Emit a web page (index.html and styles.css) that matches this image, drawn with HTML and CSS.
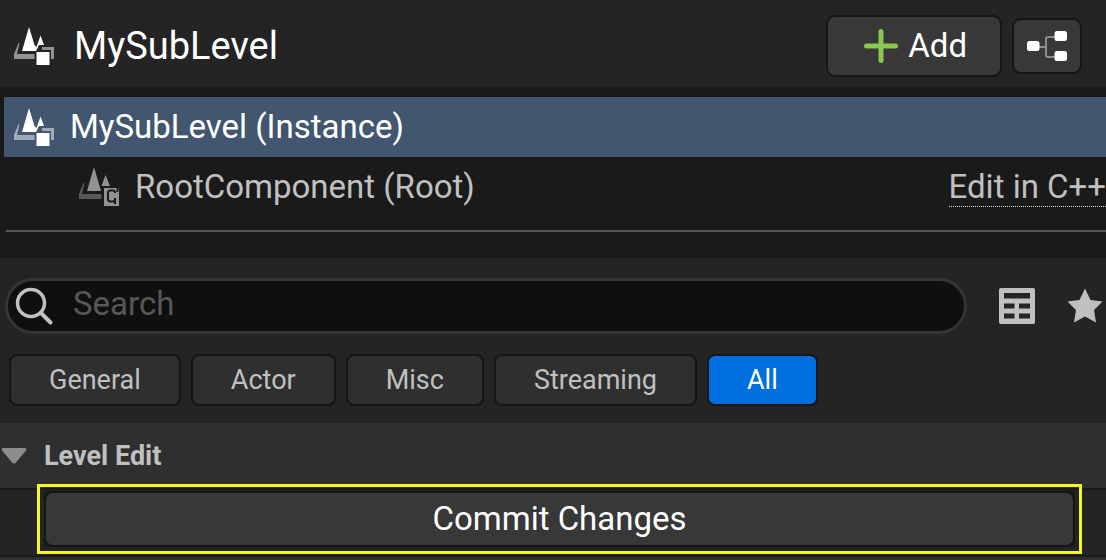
FILE: index.html
```html
<!DOCTYPE html>
<html lang="en">
<head>
    <meta charset="UTF-8">
    <meta name="viewport" content="width=device-width, initial-scale=1.0">
    <title>MySubLevel - Details</title>
    <link rel="stylesheet" href="styles.css">
</head>
<body>

<header class="header">
    <svg class="level-icon" viewBox="0 0 40 38" aria-hidden="true">
        <path class="base" d="M4.500 16H5.500L3 27H20.500V32H0V27Z M28 20H40V32H37V23H28Z"/>
        <path class="solid" d="M15 0L20.500 18L22.500 20L26.500 8.500L30 18H25L22 24H8Z"/>
        <path class="solid" d="M22.500 25H35.500V38H22.500Z"/>
    </svg>
    <h1>MySubLevel</h1>
    <div class="header-actions">
        <button type="button" class="btn add-btn">
            <svg width="34" height="34" viewBox="0 0 34 34" aria-hidden="true">
                <path d="M17 2.500V31.500M2.500 17H31.500" stroke="#8bc64f" stroke-width="5" stroke-linecap="round"/>
            </svg>
            Add
        </button>
        <button type="button" class="btn graph-btn" aria-label="Edit Blueprint">
            <svg width="40" height="32" viewBox="0 0 40 32" fill="none" aria-hidden="true">
                <path d="M12 17H19M28 7H21Q19 7 19 9V25Q19 27 21 27H28" stroke="#8c8c8c" stroke-width="2"/>
                <rect x="0" y="11" width="12.500" height="10" rx="2.500" fill="#fff"/>
                <rect x="27.500" y="1" width="12.500" height="10" rx="2.500" fill="#fff"/>
                <rect x="27.500" y="21" width="12.500" height="10" rx="2.500" fill="#fff"/>
            </svg>
        </button>
    </div>
</header>

<section class="tree">
    <div class="tree-row selected">
        <svg class="level-icon" viewBox="0 0 40 38" aria-hidden="true">
            <path class="base" d="M4.500 16H5.500L3 27H20.500V32H0V27Z M28 20H40V32H37V23H28Z"/>
            <path class="solid" d="M15 0L20.500 18L22.500 20L26.500 8.500L30 18H25L22 24H8Z"/>
            <path class="solid" d="M22.500 25H35.500V38H22.500Z"/>
        </svg>
        <span>MySubLevel (Instance)</span>
    </div>
    <div class="tree-row child">
        <svg width="40" height="40" viewBox="0 0 40 40" aria-hidden="true">
            <path d="M4.500 16H5.500L3 27H22.500V32H0V27Z" fill="#595959"/>
            <path d="M15 0L22 24H8Z M26.500 8L31 19H22.500Z" fill="#929292"/>
            <path d="M25 21H40V39H25Z" fill="#929292"/>
            <path d="M36 26V25Q36 23.500 34 23.500H31.500Q29 23.500 29 26V32Q29 34.500 31.500 34.500H34Q36 34.500 36 32.500V31M36 37V33M38.500 21V25" fill="none" stroke="#1a1a1a" stroke-width="2"/>
        </svg>
        <span>RootComponent (Root)</span>
        <a class="edit-link" href="#">Edit in C++</a>
    </div>
    <hr class="divider">
</section>

<section class="details">
    <div class="search-row">
        <label class="search-box">
            <svg width="40" height="40" viewBox="0 0 40 40" fill="none" stroke="#c0c0c0" aria-hidden="true">
                <circle cx="16" cy="17" r="13.500" stroke-width="3.500"/>
                <path d="M26 27L35.500 36.500" stroke-width="4" stroke-linecap="round"/>
            </svg>
            <input type="text" placeholder="Search" aria-label="Search">
        </label>
        <button type="button" class="icon-btn" aria-label="Property matrix">
            <svg width="36" height="36" viewBox="0 0 36 36" aria-hidden="true">
                <rect width="36" height="36" rx="2" fill="#c0c0c0"/>
                <path d="M5 5H31V10.500H5Z M5 15.500H15.500V20.500H5Z M20 15.500H31V20.500H20Z M5 25.500H15.500V30.500H5Z M20 25.500H31V30.500H20Z" fill="#242424"/>
            </svg>
        </button>
        <button type="button" class="icon-btn" aria-label="Favorites">
            <svg width="36" height="36" viewBox="0 0 36 36" aria-hidden="true">
                <path d="M18 0.500L23.500 12L35.500 13.500L27 22L29 34.500L18 28.500L7 34.500L9 22L0.500 13.500L12.500 12Z" fill="#c0c0c0"/>
            </svg>
        </button>
    </div>

    <div class="filters">
        <button type="button" class="filter">General</button>
        <button type="button" class="filter">Actor</button>
        <button type="button" class="filter">Misc</button>
        <button type="button" class="filter">Streaming</button>
        <button type="button" class="filter active">All</button>
    </div>

    <h2 class="category">
        <svg width="26" height="16" viewBox="0 0 26 16" aria-hidden="true">
            <path d="M2 0H24Q26 0.500 25 2.500L14.500 15Q13 16 11.500 15L1 2.500Q0 0.500 2 0Z" fill="#8c8c8c"/>
        </svg>
        Level Edit
    </h2>
    <div class="category-body">
        <div class="highlight">
            <button type="button" class="btn commit-btn">Commit Changes</button>
        </div>
    </div>
</section>

</body>
</html>
```
FILE: styles.css
```css
* {
    box-sizing: border-box;
}

body {
    font-family: Roboto, "Noto Sans", sans-serif;
    font-size: 33px;
    line-height: 40px;
    margin: 0;
    background-color: #2f2f2f;
    color: #c0c0c0;
    overflow-x: hidden;
}

button, input {
    font-family: inherit;
    font-size: inherit;
    line-height: inherit;
    color: inherit;
}

svg {
    display: block;
    flex: none;
}

.btn {
    display: flex;
    align-items: center;
    justify-content: center;
    background-color: #383838;
    color: white;
    border: 2px solid #151515;
    border-radius: 9px;
    cursor: pointer;
}

.btn:hover {
    background-color: #575757;
}

/* Header */
.header {
    display: flex;
    align-items: center;
    background-color: #242424;
    padding: 15px 24px 10px 14px;
}

.header h1 {
    font-size: 38px;
    font-weight: 400;
    color: white;
    margin: 0 0 0 20px;
}

.header-actions {
    display: flex;
    align-items: center;
    gap: 10px;
    margin-left: auto;
}

.add-btn {
    gap: 10px;
    padding: 9px 33px 9px 36px;
}

.graph-btn {
    padding: 10px 13px;
}

.level-icon {
    width: 40px;
    height: 38px;
}

.level-icon .base {
    fill: white;
    opacity: 0.5;
}

.level-icon .solid {
    fill: white;
}

/* Component tree */
.tree {
    background-color: #1a1a1a;
    padding: 10px 0 26px 4px;
}

.tree-row {
    display: flex;
    align-items: center;
    gap: 16px;
    height: 60px;
    padding-left: 10px;
    white-space: nowrap;
}

.selected {
    background-color: #42576f;
    color: white;
}

.child {
    padding-left: 75px;
}

.edit-link {
    margin-left: auto;
    color: inherit;
    line-height: 38px;
    text-decoration: none;
    border-bottom: 1px dotted #e0e0e0;
}

.divider {
    border: none;
    height: 2px;
    background-color: #575757;
    margin: 13px 0 0 2px;
}

/* Details */
.details {
    background-color: #242424;
    padding-top: 20px;
}

.search-row {
    display: flex;
    align-items: center;
    padding-left: 5px;
}

.search-box {
    display: flex;
    align-items: center;
    flex: 1;
    gap: 18px;
    height: 56px;
    margin-right: 22px;
    padding: 0 24px 0 7px;
    background-color: #0f0f0f;
    border: 3px solid #353535;
    border-radius: 28px;
}

.search-box input {
    flex: 1;
    min-width: 0;
    padding: 0 0 4px;
    background: none;
    border: none;
    outline: none;
}

.search-box input::placeholder {
    color: #575757;
    opacity: 1;
}

.icon-btn {
    padding: 0 10px;
    background: none;
    border: none;
    cursor: pointer;
}

.icon-btn + .icon-btn {
    padding: 0 3px 0 22px;
}

.filters {
    display: flex;
    gap: 10px;
    padding: 20px 9px 17px;
}

.filter {
    padding: 4px 38px;
    font-size: 27px;
    background-color: #2f2f2f;
    border: 2px solid #151515;
    border-radius: 8px;
    cursor: pointer;
}

.filter.active {
    background-color: #0070e0;
    color: white;
}

.category {
    display: flex;
    align-items: center;
    gap: 17px;
    margin: 0;
    padding: 13px 1px 12px;
    font-size: 27px;
    font-weight: 700;
    background-color: #2f2f2f;
}

.category-body {
    padding: 1px 31px 8px 44px;
    border-top: 2px solid #1a1a1a;
    border-bottom: 2px solid #1a1a1a;
}

.highlight {
    background-color: #1a1a1a;
    outline: 3px solid #f6f622;
    outline-offset: 4px;
}

.commit-btn {
    width: 100%;
    padding: 6px;
}
```
